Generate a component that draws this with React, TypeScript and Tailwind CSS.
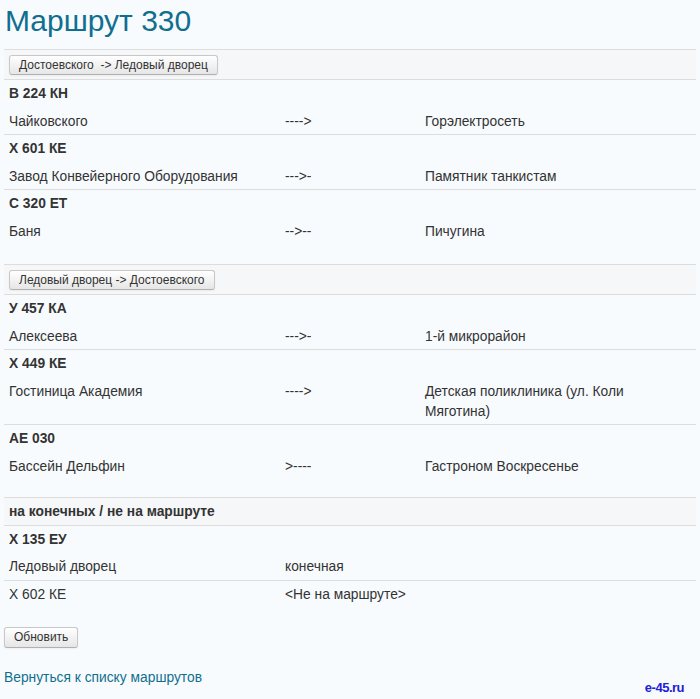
import React from "react";

interface Bus {
  plate: string;
  from: string;
  dir: string;
  to: React.ReactNode;
}

const forward: Bus[] = [
  { plate: "В 224 КН", from: "Чайковского", dir: "---->", to: "Горэлектросеть" },
  { plate: "Х 601 КЕ", from: "Завод Конвейерного Оборудования", dir: "--->-", to: "Памятник танкистам" },
  { plate: "С 320 ЕТ", from: "Баня", dir: "-->--", to: "Пичугина" },
];

const backward: Bus[] = [
  { plate: "У 457 КА", from: "Алексеева", dir: "--->-", to: "1-й микрорайон" },
  { plate: "Х 449 КЕ", from: "Гостиница Академия", dir: "---->", to: "Детская поликлиника (ул. Коли Мяготина)" },
  { plate: "АЕ 030", from: "Бассейн Дельфин", dir: ">----", to: "Гастроном Воскресенье" },
];

function Btn({ children }: { children: React.ReactNode }) {
  return (
    <button className="h-[20px] px-[9px] text-[12px] leading-[18px] text-[#333] whitespace-pre rounded-[3px] border border-[#c8c8c8] border-b-[#b0b0b0] bg-gradient-to-b from-white to-[#e6e6e6] shadow-[inset_0_1px_0_rgba(255,255,255,0.3),0_1px_2px_rgba(0,0,0,0.05)]">
      {children}
    </button>
  );
}

function HeadRow({ label }: { label: string }) {
  return (
    <div className="h-[30px] border-t border-[#ddd] bg-[#f6f7f8] px-[5px] flex items-center">
      <Btn>{label}</Btn>
    </div>
  );
}

function Block({ bus }: { bus: Bus }) {
  return (
    <div className="border-t border-[#ddd]">
      <div className="h-[27px] px-[5px] leading-[28px] font-bold">{bus.plate}</div>
      <div className="grid grid-cols-[276px_140px_1fr] pt-[5px] pb-[2px] leading-[20px]">
        <div className="px-[5px]">{bus.from}</div>
        <div className="px-[5px]">{bus.dir}</div>
        <div className="px-[5px] pr-[30px]">{bus.to}</div>
      </div>
    </div>
  );
}

export default function App() {
  return (
    <div className="relative min-h-[699px] bg-[#f8fbfe] text-[13.8px] text-[#333] font-['Liberation_Sans',Arial,sans-serif]">
      <h1 className="pl-[5px] text-[30px] leading-[42px] text-[#106f8e]">Маршрут 330</h1>

      <div className="mx-[4px] mt-[7px]">
        <HeadRow label="Достоевского  -> Ледовый дворец" />
        {forward.map((b) => (
          <Block key={b.plate} bus={b} />
        ))}
        <div className="h-[20px]" />

        <HeadRow label="Ледовый дворец -> Достоевского" />
        {backward.map((b) => (
          <Block key={b.plate} bus={b} />
        ))}
        <div className="h-[18px]" />

        <div className="h-[28px] border-t border-[#ddd] bg-[#f6f7f8] px-[5px] leading-[28px] font-bold">
          на конечных / не на маршруте
        </div>
        <div className="border-t border-[#ddd]">
          <div className="h-[27px] px-[5px] leading-[28px] font-bold">Х 135 ЕУ</div>
          <div className="grid grid-cols-[276px_1fr] h-[27px] leading-[28px]">
            <div className="px-[5px]">Ледовый дворец</div>
            <div className="px-[5px]">конечная</div>
          </div>
        </div>
        <div className="grid grid-cols-[276px_1fr] h-[28px] border-t border-[#ddd] leading-[28px]">
          <div className="px-[5px]">Х 602 КЕ</div>
          <div className="px-[5px]">&lt;Не на маршруте&gt;</div>
        </div>
      </div>

      <div className="mt-[19px] px-[4px]">
        <button className="h-[21px] px-[9px] text-[12px] leading-[19px] text-[#333] rounded-[3px] border border-[#c8c8c8] border-b-[#b0b0b0] bg-gradient-to-b from-white to-[#e6e6e6] shadow-[0_1px_2px_rgba(0,0,0,0.05)]">
          Обновить
        </button>
      </div>

      <div className="mt-[20px] px-[4px] leading-[20px]">
        <a className="text-[#106f8e]" href="#">
          Вернуться к списку маршрутов
        </a>
      </div>

      <div className="absolute right-[16px] bottom-[2px] text-[13px] font-bold tracking-[-0.5px] text-[#2020d8]">e-45.ru</div>
    </div>
  );
}
